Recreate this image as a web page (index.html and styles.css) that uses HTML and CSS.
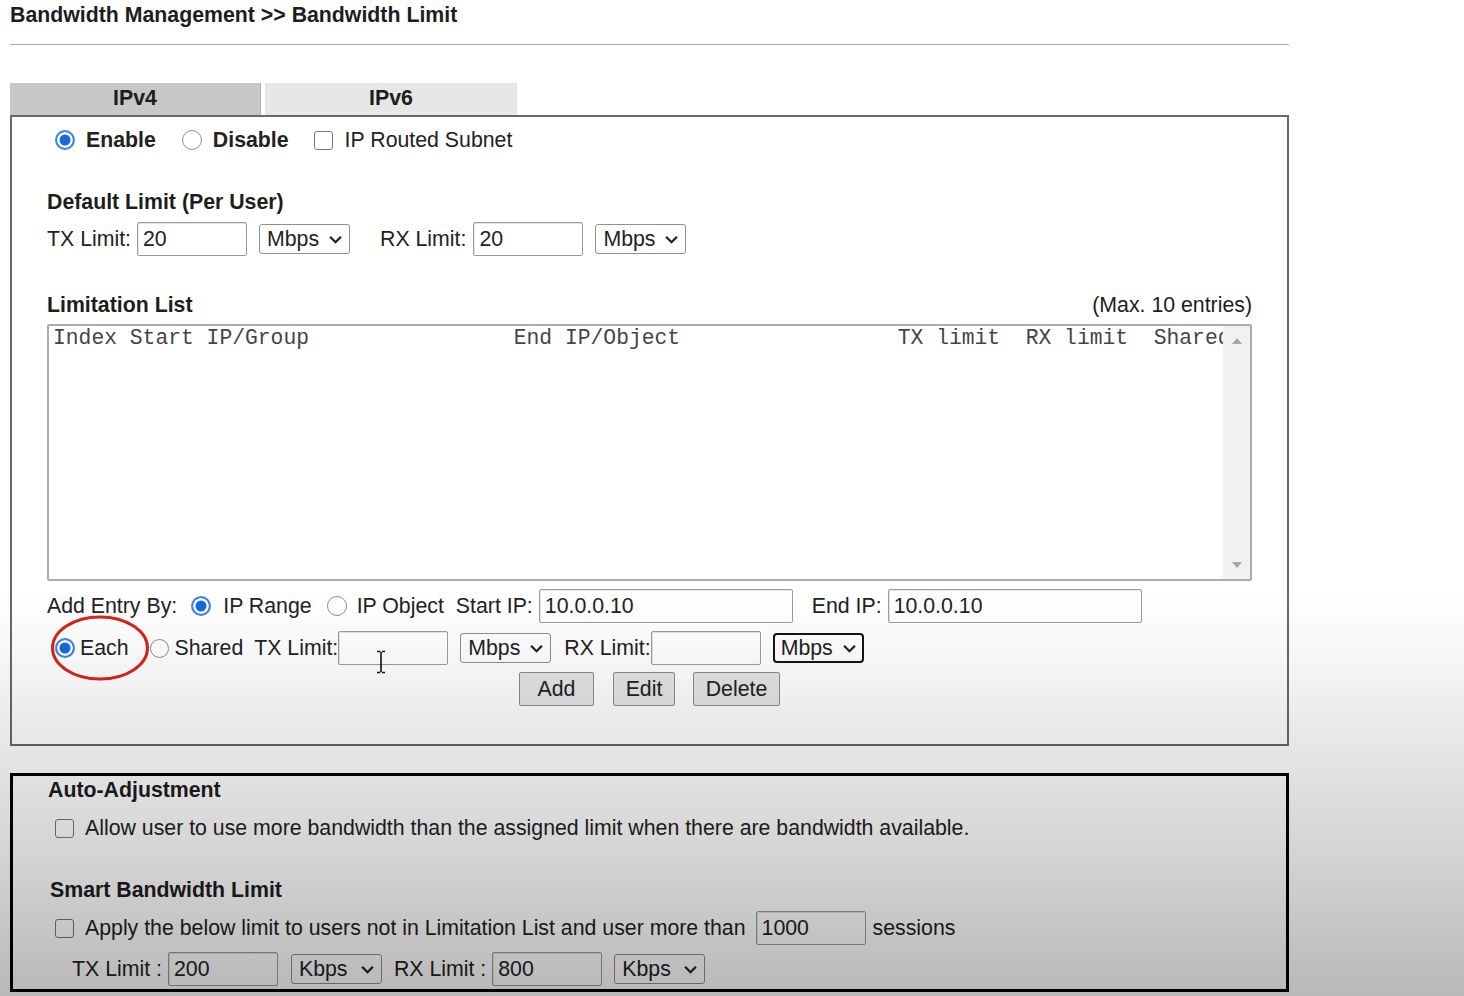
FILE: index.html
```html
<!DOCTYPE html>
<html lang="en">
<head>
<meta charset="utf-8">
<title>Bandwidth Limit</title>
<link rel="stylesheet" href="styles.css">
</head>
<body>
<div class="page">
  <h1 class="title">Bandwidth Management &gt;&gt; Bandwidth Limit</h1>
  <div class="rule"></div>

  <div class="tabs">
    <div class="tab active">IPv4</div>
    <div class="tab">IPv6</div>
  </div>

  <div class="panel">
    <div class="row mode-row">
      <span class="radio on"></span><span class="lbl bold g11">Enable</span>
      <span class="radio g26"></span><span class="lbl bold g11">Disable</span>
      <span class="check g25"></span><span class="lbl g12">IP Routed Subnet</span>
    </div>

    <div class="section-title default-title">Default Limit (Per User)</div>
    <div class="row field-row def-row">
      <span class="lbl">TX Limit:</span>
      <input class="inp w110 g6" type="text" value="20">
      <span class="sel g12"><span>Mbps</span><svg class="chev" viewBox="0 0 12 8"><path d="M1 1.5 6 6.5 11 1.5"/></svg></span>
      <span class="lbl g30">RX Limit:</span>
      <input class="inp w110 g7" type="text" value="20">
      <span class="sel g12"><span>Mbps</span><svg class="chev" viewBox="0 0 12 8"><path d="M1 1.5 6 6.5 11 1.5"/></svg></span>
    </div>

    <div class="list-head">
      <span class="bold">Limitation List</span>
      <span>(Max. 10 entries)</span>
    </div>
    <div class="listbox">
      <div class="listtext">Index Start IP/Group                End IP/Object                 TX limit  RX limit  Shared</div>
      <div class="scrollbar">
        <span class="arrow up"></span>
        <span class="arrow down"></span>
      </div>
    </div>

    <div class="row field-row add-row">
      <span class="lbl">Add Entry By:</span>
      <span class="radio on g14"></span><span class="lbl g12">IP Range</span>
      <span class="radio g15"></span><span class="lbl g10">IP Object</span>
      <span class="lbl g12">Start IP:</span>
      <input class="inp w254 g6" type="text" value="10.0.0.10">
      <span class="lbl g19">End IP:</span>
      <input class="inp w254 g6" type="text" value="10.0.0.10">
    </div>

    <div class="row field-row each-row">
      <span class="radio on g8"></span><span class="lbl g5">Each</span>
      <span class="radio small g21"></span><span class="lbl g6">Shared</span>
      <span class="lbl g11">TX Limit:</span>
      <span class="inp-wrap">
        <input class="inp w110" type="text" value="">
        <svg class="ibeam" viewBox="0 0 12 24"><path d="M2 1.5h3.2M6.8 1.5H10M6 2v20M2 22.5h3.2M6.8 22.5H10" /></svg>
      </span>
      <span class="sel g12"><span>Mbps</span><svg class="chev" viewBox="0 0 12 8"><path d="M1 1.5 6 6.5 11 1.5"/></svg></span>
      <span class="lbl g13">RX Limit:</span>
      <input class="inp w110" type="text" value="">
      <span class="sel focus g12"><span>Mbps</span><svg class="chev" viewBox="0 0 12 8"><path d="M1 1.5 6 6.5 11 1.5"/></svg></span>
      <svg class="mark" viewBox="0 0 100 66"><ellipse cx="50" cy="33" rx="47.5" ry="31" /></svg>
    </div>

    <div class="btn-row">
      <button class="btn b-add" type="button">Add</button>
      <button class="btn b-edit" type="button">Edit</button>
      <button class="btn b-del" type="button">Delete</button>
    </div>
  </div>

  <div class="panel2">
    <div class="section-title auto-title">Auto-Adjustment</div>
    <div class="row auto-row">
      <span class="check"></span><span class="lbl g11">Allow user to use more bandwidth than the assigned limit when there are bandwidth available.</span>
    </div>

    <div class="section-title smart-title">Smart Bandwidth Limit</div>
    <div class="row field-row apply-row">
      <span class="check"></span><span class="lbl g11">Apply the below limit to users not in Limitation List and user more than</span>
      <input class="inp w110 g10" type="text" value="1000">
      <span class="lbl g7">sessions</span>
    </div>
    <div class="row field-row smart-row">
      <span class="lbl">TX Limit :</span>
      <input class="inp w110 g6" type="text" value="200">
      <span class="sel g13"><span>Kbps</span><svg class="chev" viewBox="0 0 12 8"><path d="M1 1.5 6 6.5 11 1.5"/></svg></span>
      <span class="lbl g12">RX Limit :</span>
      <input class="inp w110 g6" type="text" value="800">
      <span class="sel g12"><span>Kbps</span><svg class="chev" viewBox="0 0 12 8"><path d="M1 1.5 6 6.5 11 1.5"/></svg></span>
    </div>
  </div>
</div>
<div class="shade"></div>
</body>
</html>
```

FILE: styles.css
```css
* { box-sizing: border-box; }

html, body { margin: 0; }

body {
  width: 1464px;
  height: 996px;
  overflow: hidden;
  position: relative;
  background: #fff;
  font-family: "Liberation Sans", Arial, sans-serif;
  font-size: 21.3px;
  color: #222;
}

.page {
  padding-left: 10px;
  width: 1289px;
}

.title {
  margin: 3px 0 0;
  font-size: 21.3px;
  font-weight: bold;
  line-height: 24px;
  color: #1d1d1d;
}

.rule {
  margin-top: 17px;
  height: 1px;
  background: #adadad;
}

.tabs {
  display: flex;
  gap: 4px;
  margin-top: 38px;
}

.tab {
  width: 252px;
  height: 32px;
  line-height: 30px;
  text-align: center;
  font-weight: bold;
  background: #e7e7e7;
  color: #1d1d1d;
}

.tab.active {
  width: 251px;
  background: #c7c7c7;
  border-right: 1px solid #b4b4b4;
}

.panel {
  border: 2px solid #686868;
  height: 631px;
  padding: 8px 35px 0 35px;
}

.row {
  display: flex;
  align-items: center;
  white-space: nowrap;
}

.bold { font-weight: bold; }
.lbl { flex: none; line-height: 24px; }

.mode-row { height: 30px; margin-left: 8px; }

.section-title {
  font-weight: bold;
  line-height: 24px;
  color: #1d1d1d;
}

.default-title { margin-top: 35px; }

.field-row { height: 34px; }
.def-row { margin-top: 8px; }

/* gaps */
.g5 { margin-left: 5px; }
.g6 { margin-left: 6px; }
.g7 { margin-left: 7px; }
.g8 { margin-left: 8px; }
.g10 { margin-left: 10px; }
.g11 { margin-left: 11px; }
.g12 { margin-left: 12px; }
.g13 { margin-left: 13px; }
.g14 { margin-left: 14px; }
.g15 { margin-left: 15px; }
.g19 { margin-left: 19px; }
.g21 { margin-left: 21px; }
.g25 { margin-left: 25px; }
.g26 { margin-left: 26px; }
.g30 { margin-left: 30px; }

/* radio / checkbox */
.radio {
  flex: none;
  width: 20px;
  height: 20px;
  border-radius: 50%;
  border: 1.5px solid #8d8d8d;
  background: #fff;
}

.radio.small { width: 19px; height: 19px; }

.radio.on {
  border: 2px solid #3f86e8;
  background: #1769e0;
  box-shadow: inset 0 0 0 2.5px #fff;
}

.check {
  flex: none;
  width: 19px;
  height: 19px;
  border: 1.5px solid #777;
  border-radius: 3px;
  background: #fff;
}

/* text inputs */
.inp {
  flex: none;
  height: 34px;
  border: 1px solid #9c9c9c;
  border-radius: 2px;
  box-shadow: inset 1px 1px 0 #e4e4e4;
  padding: 0 5px;
  font: inherit;
  color: #222;
  background: #fff;
  outline: none;
}

.w110 { width: 110px; }
.w254 { width: 254px; }

.inp-wrap {
  position: relative;
  flex: none;
  display: flex;
}

.ibeam {
  position: absolute;
  left: 37px;
  top: 19px;
  width: 12px;
  height: 24px;
  fill: none;
  stroke: #111;
  stroke-width: 1.6;
}

/* selects */
.sel {
  flex: none;
  width: 91px;
  height: 30px;
  display: flex;
  align-items: center;
  justify-content: space-between;
  padding: 0 7px 0 7px;
  border: 1px solid #8f8f8f;
  border-radius: 3px;
  background: #fff;
  color: #222;
  line-height: 24px;
}

.sel.focus {
  border: 2px solid #141414;
  border-radius: 4px;
  padding: 0 6px;
}

.chev {
  width: 13px;
  height: 9px;
  fill: none;
  stroke: #222;
  stroke-width: 2.1;
}

/* limitation list */
.list-head {
  display: flex;
  justify-content: space-between;
  margin-top: 37px;
  line-height: 24px;
  color: #1d1d1d;
}

.listbox {
  margin-top: 7px;
  height: 257px;
  border: 2px solid #acacac;
  border-radius: 2px;
  display: flex;
  background: #fff;
}

.listtext {
  flex: 1;
  overflow: hidden;
  white-space: pre;
  font-family: "Liberation Mono", "Courier New", monospace;
  font-size: 21.33px;
  line-height: 24px;
  padding: 0 0 0 4px;
  color: #454545;
}

.scrollbar {
  flex: none;
  width: 27px;
  background: #f1f1f1;
  display: flex;
  flex-direction: column;
  justify-content: space-between;
  align-items: center;
  padding: 12px 0 11px;
}

.arrow {
  width: 0;
  height: 0;
  border-left: 5.5px solid transparent;
  border-right: 5.5px solid transparent;
}

.arrow.up { border-bottom: 6px solid #a5a5a5; }
.arrow.down { border-top: 6px solid #a5a5a5; }

.add-row { margin-top: 8px; }

.each-row {
  margin-top: 8px;
  position: relative;
}

.mark {
  position: absolute;
  left: 3px;
  top: -16px;
  width: 100px;
  height: 66px;
  fill: none;
  stroke: #d9241c;
  stroke-width: 3;
  overflow: visible;
}

.btn-row {
  display: flex;
  justify-content: center;
  gap: 18px;
  margin-top: 7px;
}

.btn {
  height: 34px;
  font: inherit;
  color: #222;
  background: #e5e5e5;
  border: 1px solid #8c8c8c;
  border-radius: 2px;
  padding: 0;
}

.b-add { width: 75px; margin-right: 1px; }
.b-edit { width: 62px; }
.b-del { width: 87px; }

/* second box */
.panel2 {
  margin-top: 27px;
  height: 219px;
  border: 3px solid #000;
  padding: 2px 35px 0 35px;
}

.auto-row { height: 30px; margin-top: 11px; margin-left: 7px; }

.smart-title { margin-top: 35px; margin-left: 2px; }

.apply-row { margin-top: 9px; margin-left: 7px; }

.smart-row { margin-top: 7px; margin-left: 24px; }

/* video-style darkening overlay at the bottom */
.shade {
  position: absolute;
  inset: 0;
  pointer-events: none;
  background: linear-gradient(to bottom,
    rgba(0, 0, 0, 0) 0,
    rgba(0, 0, 0, 0) 590px,
    rgba(0, 0, 0, 0.03) 650px,
    rgba(0, 0, 0, 0.1) 750px,
    rgba(0, 0, 0, 0.16) 840px,
    rgba(0, 0, 0, 0.21) 910px,
    rgba(0, 0, 0, 0.28) 996px);
}
```
